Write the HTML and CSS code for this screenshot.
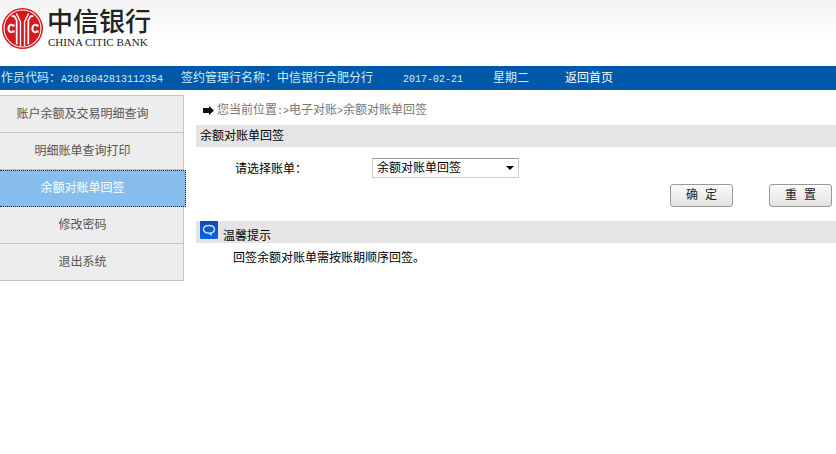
FILE: index.html
```html
<!DOCTYPE html>
<html lang="zh-CN">
<head>
    <meta charset="UTF-8">
    <meta name="viewport" content="width=device-width, initial-scale=1.0">
    <title>余额对账单回签</title>
    <link rel="stylesheet" href="styles.css">
</head>
<body>
    <div class="header">
        <svg class="logo" viewBox="0 0 120 120" aria-hidden="true">
            <circle cx="60" cy="60" r="60" fill="#d7191f"/>
            <circle cx="60" cy="60" r="54" fill="none" stroke="#fff" stroke-width="3"/>
            <g fill="none" stroke="#fff">
                <path d="M34 48V54C30 45 19 49 19 60S30 75 34 66V72" stroke-width="6"/>
                <path d="M104 48V54C100 45 89 49 89 60S100 75 104 66V72" stroke-width="6"/>
                <path d="M28 24H36L43 36V106" stroke-width="5"/>
                <path d="M92 24H84L77 36V106" stroke-width="5"/>
                <path d="M42 16L54 40V112" stroke-width="4"/>
                <path d="M78 16L66 40V112" stroke-width="4"/>
            </g>
        </svg>
        <div class="brand">
            <div class="brand-cn">中信银行</div>
            <div class="brand-en">CHINA CITIC BANK</div>
        </div>
    </div>
    <div class="topbar">
        <span class="operator">作员代码：<span class="num">A2016042813112354</span></span>
        <span class="branch">签约管理行名称：中信银行合肥分行</span>
        <span class="date num">2017-02-21</span>
        <span class="week">星期二</span>
        <a href="#">返回首页</a>
    </div>
    <div class="container">
        <ul class="menu">
            <li><a href="#">账户余额及交易明细查询</a></li>
            <li><a href="#">明细账单查询打印</a></li>
            <li><a href="#" class="active">余额对账单回签</a></li>
            <li><a href="#">修改密码</a></li>
            <li><a href="#">退出系统</a></li>
        </ul>
        <div class="main">
            <div class="position">
                <svg class="arrow" viewBox="0 0 12 10" aria-hidden="true">
                    <path d="M1 3H7V1L12 5.500L7 10V8H1Z" fill="#111"/>
                </svg>
                <span>您当前位置<span class="num">:&gt;</span>电子对账<span class="num">&gt;</span>余额对账单回签</span>
            </div>
            <div class="title">余额对账单回签</div>
            <form>
                <div class="form-row">
                    <label for="bill">请选择账单：</label>
                    <div class="select-box">
                        <select id="bill" name="bill">
                            <option>余额对账单回签</option>
                        </select>
                        <svg class="caret" viewBox="0 0 8 4" aria-hidden="true">
                            <path d="M0 0H8L4 4Z" fill="#000"/>
                        </svg>
                    </div>
                </div>
                <div class="buttons">
                    <button type="submit">确 定</button>
                    <button type="reset">重 置</button>
                </div>
            </form>
            <div class="title tips-title">
                <svg class="tips-icon" viewBox="0 0 18 18" aria-hidden="true">
                    <defs>
                        <linearGradient id="blue" x1="0" y1="0" x2="0" y2="1">
                            <stop offset="0" stop-color="#0a49b4"/>
                            <stop offset="1" stop-color="#0c66e0"/>
                        </linearGradient>
                    </defs>
                    <rect width="18" height="18" rx="1" fill="url(#blue)"/>
                    <path d="M9 4.500C5.500 4.500 3.500 6.200 3.500 8.300S5.500 12 8.500 12L11 13.500L10.500 12C13 11.700 14.500 10.300 14.500 8.300S12.500 4.500 9 4.500Z" fill="#1559c8" stroke="#c2e2ff" stroke-width="1.400"/>
                </svg>
                <span>温馨提示</span>
            </div>
            <p class="tips">回签余额对账单需按账期顺序回签。</p>
        </div>
    </div>
</body>
</html>
```
FILE: styles.css
```css
* {
    margin: 0;
    padding: 0;
    box-sizing: border-box;
}

body {
    background: #fff;
    color: #000;
    font: 12px/18px "Noto Sans CJK SC", sans-serif;
}

a {
    color: inherit;
    text-decoration: none;
}

.num {
    font-family: "Liberation Mono", monospace;
    font-size: 10px;
}

/* 頂部 */
.header {
    display: flex;
    align-items: flex-start;
    height: 66px;
    padding: 8px 2px 0;
    background: linear-gradient(#f3f3f3, #fff 40px);
}

.logo {
    width: 41px;
    height: 41px;
    margin-right: 4px;
}

.brand {
    color: #222;
    white-space: nowrap;
}

.brand-cn {
    font-size: 26px;
    font-weight: 500;
    line-height: 24px;
}

.brand-en {
    padding: 4px 0 0 1px;
    font: 11px/12px "Liberation Serif", serif;
}

.topbar {
    display: flex;
    align-items: baseline;
    height: 24px;
    padding: 0 1px;
    background: #0059a8;
    color: #c5f1ff;
    line-height: 22px;
    white-space: nowrap;
}

.operator {
    margin-right: 18px;
}

.branch,
.date {
    margin-right: 30px;
}

.week {
    margin-right: 36px;
}

.topbar a {
    color: #fff;
}

.container {
    display: flex;
    padding-top: 5px;
}

/* 左側菜單 */
.menu {
    flex: none;
    width: 184px;
    margin-right: 12px;
    list-style: none;
    border-top: 1px solid #c4c4c4;
}

.menu a {
    display: block;
    height: 37px;
    padding-right: 18px;
    border-right: 1px solid #c4c4c4;
    border-bottom: 1px solid #c4c4c4;
    background: #ededed;
    color: #555;
    line-height: 34px;
    text-align: center;
}

.menu a.active {
    margin-right: -2px;
    padding-right: 20px;
    border: 1px dotted #222;
    border-left: none;
    background: #86bdec;
    color: #fff;
    line-height: 32px;
}

.main {
    flex: 1;
}

.position {
    display: flex;
    align-items: center;
    gap: 3px;
    height: 30px;
    padding: 0 0 0 6px;
    color: #777;
}

.arrow {
    width: 12px;
    height: 10px;
}

.title {
    height: 22px;
    padding-left: 4px;
    background: #e5e5e5;
    line-height: 20px;
}

.form-row {
    display: flex;
    align-items: center;
    padding: 11px 0 6px 39px;
}

.form-row label {
    width: 137px;
}

.select-box {
    display: grid;
    align-items: center;
    width: 147px;
}

.select-box select {
    grid-area: 1 / 1;
    height: 20px;
    padding: 0 20px 2px 4px;
    appearance: none;
    border: 1px solid #ccc;
    border-top-color: #999;
    border-radius: 1px;
    background: #fff;
    color: #000;
    font: 12px/16px "Noto Sans CJK SC", sans-serif;
}

.caret {
    grid-area: 1 / 1;
    justify-self: end;
    width: 8px;
    height: 4px;
    margin-right: 5px;
    pointer-events: none;
}

.buttons {
    display: flex;
    justify-content: flex-end;
    gap: 36px;
    padding: 0 4px 14px 0;
}

.buttons button {
    width: 63px;
    height: 23px;
    border: 1px solid #999;
    border-radius: 3px;
    background: linear-gradient(#fafafa, #e2e2e2);
    color: #222;
    font: 12px/18px "Liberation Mono", "Noto Sans CJK SC", monospace;
}

.tips-title {
    display: flex;
    gap: 5px;
    line-height: 28px;
}

.tips-icon {
    width: 18px;
    height: 18px;
}

.tips {
    padding: 5px 0 0 37px;
}
```
